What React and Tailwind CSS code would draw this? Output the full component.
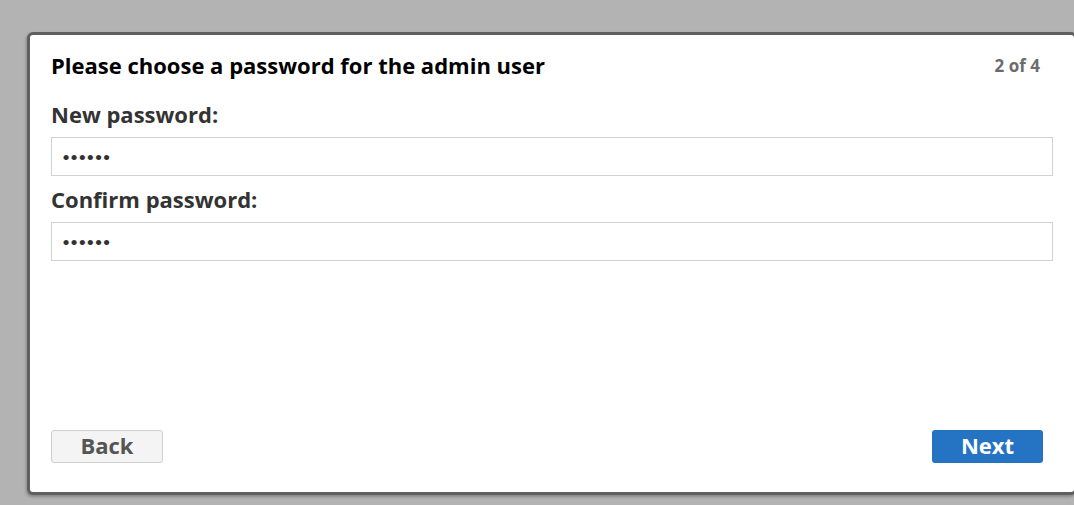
export default function App() {
  return (
    <div className="h-[505px] w-[1074px] overflow-hidden bg-[#b3b3b3] pl-[27px] pt-[32px]" style={{ fontFamily: '"Open Sans", Lato, sans-serif' }}>
      {/* Setup wizard dialog */}
      <div className="flex h-[463px] w-[1050px] flex-col rounded-[6px] border-[3px] border-[#5f5f5f] bg-white px-[21px] pb-[29px] pt-[16px] shadow-[-1px_2px_3px_rgba(0,0,0,0.25)]">
        <div className="flex items-center justify-between">
          <h1 className="text-[22px] font-bold leading-[29px] text-black">Please choose a password for the admin user</h1>
          <span className="mr-[13px] text-[17px] font-bold text-[#6b6b6b]">2 of 4</span>
        </div>

        <label className="mt-[20px] text-[22px] font-bold leading-[28px] text-[#333]">New password:</label>
        <input
          type="password"
          readOnly
          value="123456"
          style={{ fontFamily: 'Lato, sans-serif' }}
          className="mt-[9px] h-[39px] w-full border border-[#d2d2d2] px-[10px] text-[14px] text-[#333] outline-none"
        />

        <label className="mt-[9px] text-[22px] font-bold leading-[28px] text-[#333]">Confirm password:</label>
        <input
          type="password"
          readOnly
          value="123456"
          style={{ fontFamily: 'Lato, sans-serif' }}
          className="mt-[9px] h-[39px] w-full border border-[#d2d2d2] px-[10px] text-[14px] text-[#333] outline-none"
        />

        <div className="mt-auto flex items-center justify-between">
          <button className="h-[33px] w-[112px] rounded-[3px] border border-[#cfcfcf] bg-[#f4f4f4] pb-[3px] text-[22px] font-bold leading-[28px] text-[#555]">
            Back
          </button>
          <button className="mr-[10px] h-[33px] w-[111px] rounded-[3px] bg-[#2574c4] pb-[3px] text-[22px] font-bold leading-[28px] text-white">
            Next
          </button>
        </div>
      </div>
    </div>
  );
}
